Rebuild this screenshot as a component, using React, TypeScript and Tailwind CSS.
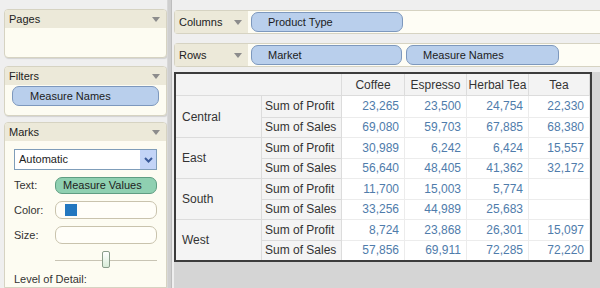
import React from 'react'

const Caret = () => (
    <svg width="8" height="5" viewBox="0 0 8 5" className="shrink-0">
        <path d="M0 0 L8 0 L4 5 Z" fill="#8c8c8c" />
    </svg>
)

const Pill = ({ label, className = '' }: { label: string; className?: string }) => (
    <div className={`h-[20px] rounded-[7px] border border-[#7d98bd] bg-[#b9cfec] flex items-center pl-[16px] text-[#1c1c1c] ${className}`}>
        {label}
    </div>
)

const Card = ({ title, children, className = '' }: { title: string; children?: React.ReactNode; className?: string }) => (
    <div className={`rounded-[4px] border border-[#d6d3c2] bg-[#fdfcf2] shadow-[1px_1px_1px_rgba(0,0,0,0.12)] overflow-hidden ${className}`}>
        <div className="h-[18px] bg-[#ece9d9] flex items-center justify-between pl-[4px] pr-[6px] text-[#222]">
            <span>{title}</span>
            <Caret />
        </div>
        {children}
    </div>
)

const products = ['Coffee', 'Espresso', 'Herbal Tea', 'Tea']

const markets = [
    { name: 'Central', profit: ['23,265', '23,500', '24,754', '22,330'], sales: ['69,080', '59,703', '67,885', '68,380'] },
    { name: 'East', profit: ['30,989', '6,242', '6,424', '15,557'], sales: ['56,640', '48,405', '41,362', '32,172'] },
    { name: 'South', profit: ['11,700', '15,003', '5,774', ''], sales: ['33,256', '44,989', '25,683', ''] },
    { name: 'West', profit: ['8,724', '23,868', '26,301', '15,097'], sales: ['57,856', '69,911', '72,285', '72,220'] },
]

const Table = () => {
    const rows: React.ReactNode[] = []
    markets.forEach((m, i) => {
        const top = i > 0 ? 'border-t border-[#cfcfcf]' : ''
        rows.push(
            <div key={m.name} className={`row-span-2 bg-[#f4f4f4] border-r border-[#dcdcdc] flex items-center pl-[6px] text-[#333] ${top}`}>
                {m.name}
            </div>
        )
        rows.push(
            <div key={m.name + 'p'} className={`bg-[#f4f4f4] border-r border-[#dcdcdc] flex items-center pl-[3px] text-[#333] ${top}`}>
                Sum of Profit
            </div>
        )
        m.profit.forEach((v, j) => (
            rows.push(
                <div key={m.name + 'p' + j} className={`bg-white border-r border-[#ececec] flex items-center justify-end pr-[5px] text-[#4f7cab] ${top}`}>
                    {v}
                </div>
            )
        ))
        rows.push(
            <div key={m.name + 's'} className="bg-[#f4f4f4] border-r border-t border-[#dcdcdc] flex items-center pl-[3px] text-[#333]">
                Sum of Sales
            </div>
        )
        m.sales.forEach((v, j) => (
            rows.push(
                <div key={m.name + 's' + j} className="bg-white border-r border-t border-[#ececec] flex items-center justify-end pr-[5px] text-[#4f7cab]">
                    {v}
                </div>
            )
        ))
    })

    return (
        <div className="border-2 border-[#3c3c3c] w-fit grid grid-cols-[86px_80px_63px_62px_62px_61px] grid-rows-[22px_repeat(8,20.5px)] text-[12px] leading-none">
            <div className="col-span-2 bg-[#f3f3f3] border-r border-b border-[#dcdcdc]" />
            {products.map((p) => (
                <div key={p} className="bg-[#f3f3f3] border-r border-b border-[#dcdcdc] flex items-center justify-center text-[#333]">
                    {p}
                </div>
            ))}
            {rows}
        </div>
    )
}

const App = () => {
    return (
        <div className="w-[600px] h-[288px] overflow-hidden flex bg-[#efefef] font-['Liberation_Sans',Arial,sans-serif] text-[11px] leading-none">
            {/* left side: pages, filters, marks */}
            <div className="w-[167px] shrink-0 pl-[4px] pt-[9px] flex flex-col">
                <Card title="Pages" className="w-[163px]">
                    <div className="h-[29px]" />
                </Card>
                <Card title="Filters" className="w-[163px] mt-[8px]">
                    <div className="px-[7px] pt-[1px] pb-[9px]">
                        <Pill label="Measure Names" className="h-[19px] pl-[17px]" />
                    </div>
                </Card>
                <Card title="Marks" className="w-[163px] mt-[6px] flex-1 rounded-b-none">
                    <div className="px-[9px] pt-[8px] flex flex-col">
                        <div className="h-[21px] border border-[#7f9db9] bg-white flex items-center justify-between text-[#222]">
                            <span className="pl-[4px]">Automatic</span>
                            <div className="w-[16px] h-[19px] bg-[#c3d4f7] flex items-center justify-center">
                                <svg width="9" height="6" viewBox="0 0 9 6">
                                    <path d="M1 1 L4.5 4.5 L8 1" stroke="#3a5a9a" strokeWidth="2" fill="none" />
                                </svg>
                            </div>
                        </div>
                        <div className="mt-[7px] flex items-center gap-[8px]">
                            <span className="w-[33px] text-[#333]">Text:</span>
                            <div className="flex-1 h-[17px] rounded-[7px] border border-[#5f9d82] bg-[#8fd0b1] flex items-center pl-[7px] text-[#1d1d1d]">
                                Measure Values
                            </div>
                        </div>
                        <div className="mt-[7px] flex items-center gap-[8px]">
                            <span className="w-[33px] text-[#333]">Color:</span>
                            <div className="flex-1 h-[18px] rounded-[7px] border border-[#c9c3ad] bg-[#fffef8] flex items-center pl-[9px]">
                                <div className="w-[12px] h-[12px] bg-[#2378c0]" />
                            </div>
                        </div>
                        <div className="mt-[7px] flex items-center gap-[8px]">
                            <span className="w-[33px] text-[#333]">Size:</span>
                            <div className="flex-1 h-[18px] rounded-[7px] border border-[#c9c3ad] bg-[#fffef8]" />
                        </div>
                        <div className="mt-[7px] ml-[41px] h-[18px] relative flex items-center">
                            <div className="w-full h-px bg-[#c8c4b4]" />
                            <div className="absolute left-[47px] top-0 w-[8px] h-[17px] rounded-[2px] border border-[#8a9c8a] bg-gradient-to-b from-white to-[#d8ecd8]" />
                        </div>
                        <div className="mt-[5px] text-[#333]">Level of Detail:</div>
                        <div className="mt-[4px] h-[10px] rounded-t-[7px] border border-[#c9c3ad] bg-[#fffef8]" />
                    </div>
                </Card>
            </div>

            {/* splitter */}
            <div className="w-[7px] shrink-0 flex">
                <div className="w-[1px] bg-[#d8d8d8]" />
                <div className="w-[3px] bg-[#cfcfcf]" />
                <div className="w-[1px] bg-[#bdbdbd]" />
            </div>

            {/* right side: shelves and view */}
            <div className="flex-1 flex flex-col">
                <div className="pt-[10px] flex flex-col gap-[9px]">
                    <div className="h-[24px] rounded-l-[4px] border-y border-l border-[#d6d3c2] bg-[#fefdf5] flex items-center">
                        <div className="w-[73px] h-full bg-[#ece9d9] flex items-center justify-between pl-[4px] pr-[6px] text-[#222]">
                            <span>Columns</span>
                            <Caret />
                        </div>
                        <Pill label="Product Type" className="ml-[3px] w-[152px]" />
                    </div>
                    <div className="h-[24px] rounded-l-[4px] border-y border-l border-[#d6d3c2] bg-[#fefdf5] flex items-center">
                        <div className="w-[73px] h-full bg-[#ece9d9] flex items-center justify-between pl-[4px] pr-[6px] text-[#222]">
                            <span>Rows</span>
                            <Caret />
                        </div>
                        <Pill label="Market" className="ml-[3px] w-[151px]" />
                        <Pill label="Measure Names" className="ml-[4px] w-[153px]" />
                    </div>
                </div>
                <div className="mt-[5px] flex-1 bg-[#d5d5d5] pt-[0px]">
                    <Table />
                </div>
            </div>
        </div>
    )
}

export default App
